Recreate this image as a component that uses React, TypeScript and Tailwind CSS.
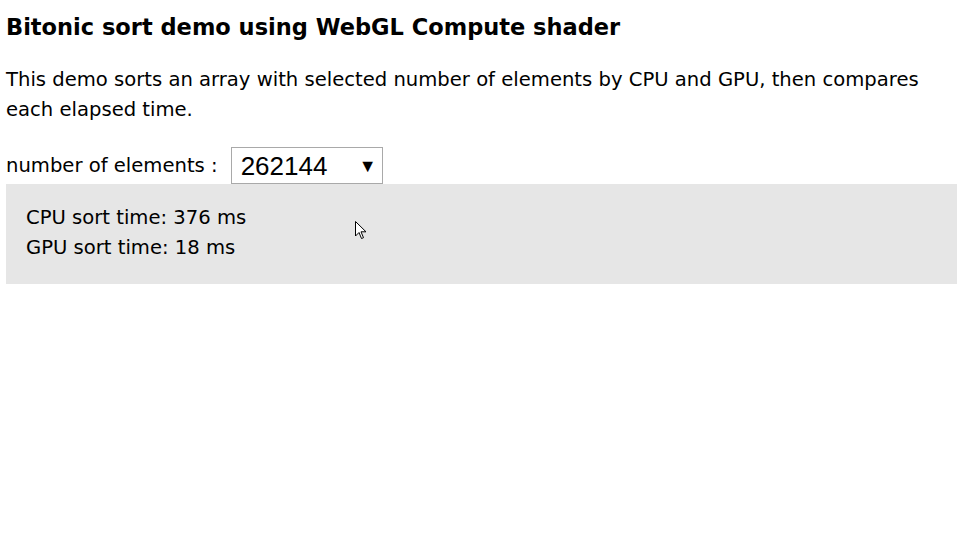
import React from 'react';

const font = { fontFamily: '"DejaVu Sans", "Noto Sans", sans-serif' };

export default function App() {
  return (
    <div className="relative min-h-[540px] bg-white px-[6px] text-black" style={font}>
      <h1 className="pt-[12px] text-[22.5px] font-bold leading-[30px]">
        Bitonic sort demo using WebGL Compute shader
      </h1>
      <p className="mt-[22px] pt-[1px] text-[19.6px] leading-[30px]">
        This demo sorts an array with selected number of elements by CPU and GPU, then compares each elapsed time.
      </p>
      <div className="mt-[22px] flex items-center">
        <span className="text-[19.6px] leading-[30px]">number of elements :</span>
        <div className="ml-[13px] flex h-[37px] w-[152px] items-center justify-between border border-[#a9a9a9] bg-white pl-[9px] pr-[5px] font-['Liberation_Sans',sans-serif]">
          <span className="text-[26px] leading-none">262144</span>
          <span className="text-[18px] leading-none">▼</span>
        </div>
      </div>
      <div className="mr-[-3px] h-[100px] bg-[#e6e6e6] px-[20px] pt-[19px] text-[19.6px] leading-[30px]">
        <div>CPU sort time: 376 ms</div>
        <div>GPU sort time: 18 ms</div>
      </div>
      <svg className="absolute left-[355px] top-[221px]" width="12" height="19" viewBox="0 0 12 19">
        <path d="M0.5 0.5 L0.5 15 L4 11.5 L6.5 17.5 L8.5 16.7 L6 10.8 L11 10.8 Z" fill="white" stroke="black" strokeWidth="1" />
      </svg>
    </div>
  );
}
